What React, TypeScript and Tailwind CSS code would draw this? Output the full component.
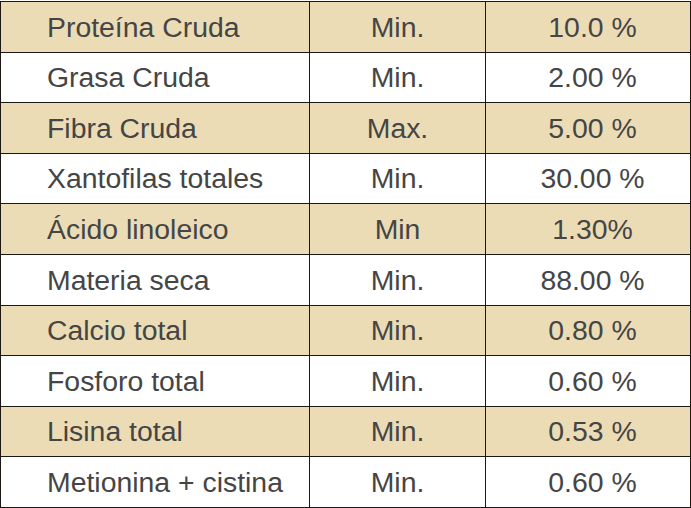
import React from "react";

const rows: [string, string, string][] = [
  ["Proteína Cruda", "Min.", "10.0 %"],
  ["Grasa Cruda", "Min.", "2.00 %"],
  ["Fibra Cruda", "Max.", "5.00 %"],
  ["Xantofilas totales", "Min.", "30.00 %"],
  ["Ácido linoleico", "Min", "1.30%"],
  ["Materia seca", "Min.", "88.00 %"],
  ["Calcio total", "Min.", "0.80 %"],
  ["Fosforo total", "Min.", "0.60 %"],
  ["Lisina total", "Min.", "0.53 %"],
  ["Metionina + cistina", "Min.", "0.60 %"],
];

export default function App() {
  return (
    <div className="w-[691px] h-[508px] bg-white pt-[1px]">
      <table
        className="border-collapse w-[690px] table-fixed text-[28.4px] text-[#454545]"
        style={{ fontFamily: '"Liberation Sans", Arial, sans-serif' }}
      >
        <colgroup>
          <col className="w-[309px]" />
          <col className="w-[176px]" />
          <col className="w-[205px]" />
        </colgroup>
        <tbody>
          {rows.map((r, i) => (
            <tr key={i} className={`h-[50.6px] ${i % 2 === 0 ? "bg-[#ecdcb6]" : "bg-white"}`}>
              <td className="border border-[#1c1712] pl-[46px] pr-0 py-0 leading-none">{r[0]}</td>
              <td className="border border-[#1c1712] text-center px-0 py-0 leading-none">{r[1]}</td>
              <td className="border border-[#1c1712] text-center pl-[9px] pr-0 py-0 leading-none">{r[2]}</td>
            </tr>
          ))}
        </tbody>
      </table>
    </div>
  );
}
